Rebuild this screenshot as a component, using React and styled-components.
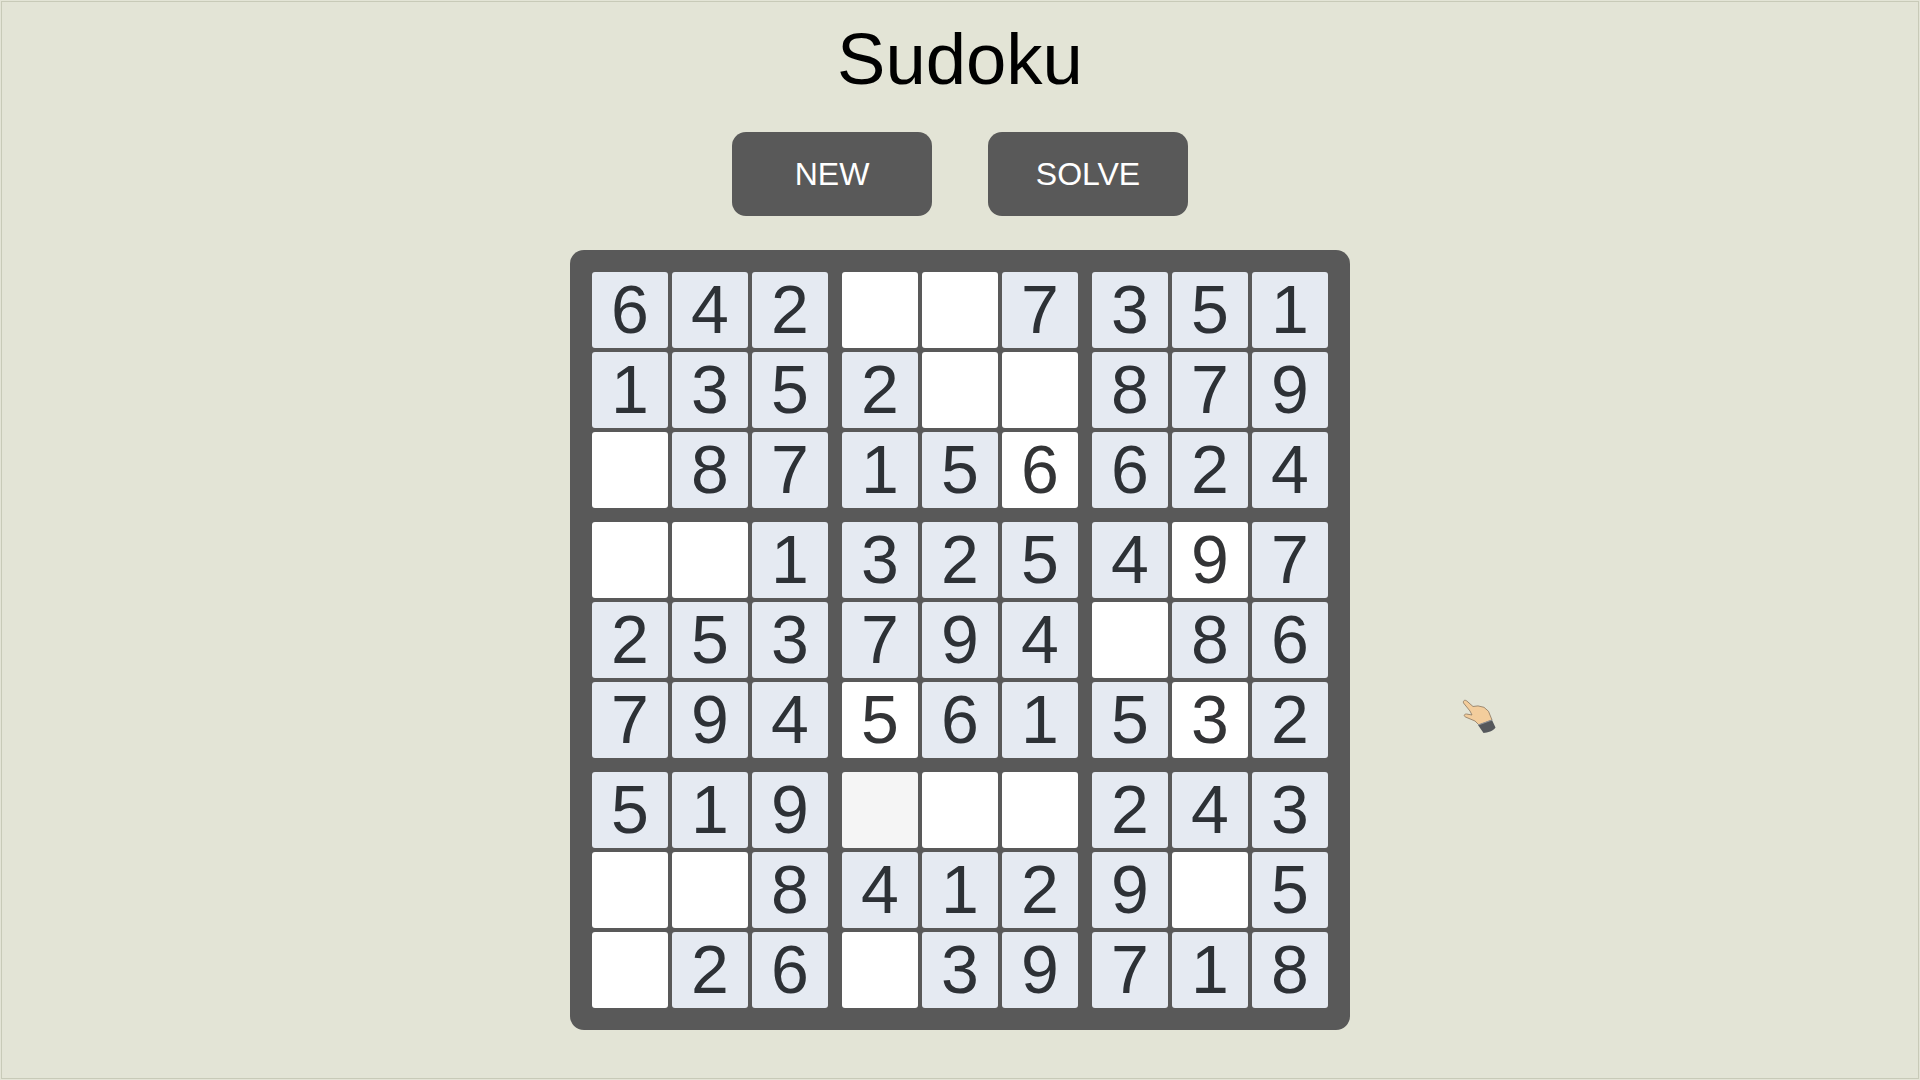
import React from "react";
import styled, { createGlobalStyle } from "styled-components";

const rows = [
  "642  7351",
  "1352  879",
  " 87156624",
  "  1325497",
  "253794 86",
  "794561532",
  "519   243",
  "  84129 5",
  " 26 39718",
];

// numbers the player typed in, these stay white like the empty cells
const filled = ["2-5", "3-7", "5-3", "5-7"];
const active = "6-3";

const indexes = [0, 1, 2];

export default function App() {
  return (
    <Page>
      <GlobalStyle />
      <Title>Sudoku</Title>
      <Toolbar>
        <Button>NEW</Button>
        <Button>SOLVE</Button>
      </Toolbar>
      <Board>
        {indexes.map((blockRow) =>
          indexes.map((blockCol) => (
            <Block key={`${blockRow}-${blockCol}`}>
              {indexes.map((r) =>
                indexes.map((c) => {
                  const row = blockRow * 3 + r;
                  const col = blockCol * 3 + c;
                  const id = `${row}-${col}`;
                  const value = rows[row][col].trim();
                  return (
                    <Cell
                      key={id}
                      $given={value !== "" && !filled.includes(id)}
                      $active={id === active}
                    >
                      {value}
                    </Cell>
                  );
                })
              )}
            </Block>
          ))
        )}
      </Board>
      <Cursor viewBox="0 0 50 50" width="50" height="50">
        <path
          d="M11.500 11C10.800 8.500 13 7.500 14.800 9L21 14.500l5-.6 6 1.400 4.500 4 3.500 8.700-13 5-4-4-9.500-4c-2-1-1.500-3 1-3l5.500 1-2-4z"
          fill="#f3cd9c"
          stroke="#8a7660"
          strokeWidth="0.8"
          strokeLinejoin="round"
        />
        <path d="M26 33l14-5 3.500 7.500c-2 3.500-8 5-12 5.500z" fill="#55585c" />
        <path d="M26 33l14-5" fill="none" stroke="#8f9296" strokeWidth="1.200" />
      </Cursor>
    </Page>
  );
}

const GlobalStyle = createGlobalStyle`
  body {
    margin: 0;
    background: #e3e4d6;
    font-family: "Liberation Sans", Arial, sans-serif;
  }
`;

const Page = styled.div`
  position: relative;
  box-sizing: border-box;
  height: 1078px;
  margin: 1px;
  padding-top: 21px;
  border: 1px solid #c8cab8;
  display: flex;
  flex-direction: column;
  align-items: center;
  overflow: hidden;
`;

const Title = styled.h1`
  margin: 0;
  font-size: 72.5px;
  font-weight: 400;
  line-height: 72px;
  color: #000;
`;

const Toolbar = styled.div`
  display: flex;
  gap: 56px;
  margin-top: 37px;
`;

const Button = styled.button`
  width: 200px;
  height: 84px;
  padding: 0;
  border: 0;
  border-radius: 14px;
  background: #595959;
  color: #fff;
  font-family: inherit;
  font-size: 32px;
`;

const Board = styled.div`
  box-sizing: border-box;
  width: 780px;
  height: 780px;
  margin-top: 34px;
  padding: 21.67px;
  border-radius: 14px;
  background: #595959;
  display: grid;
  grid-template-columns: repeat(3, 236.67px);
  grid-template-rows: repeat(3, 236.67px);
  gap: 13.33px;
`;

const Block = styled.div`
  display: grid;
  grid-template-columns: repeat(3, 76.67px);
  grid-template-rows: repeat(3, 76.67px);
  gap: 3.33px;
`;

const Cell = styled.div`
  display: flex;
  align-items: center;
  justify-content: center;
  padding-bottom: 2px;
  border-radius: 3px;
  background: ${({ $given, $active }) =>
    $active ? "#f5f5f5" : $given ? "#e5eaf2" : "#fff"};
  color: ${({ $given }) => ($given ? "#2d3136" : "#333436")};
  font-size: 68px;
  line-height: 1;
`;

const Cursor = styled.svg`
  position: absolute;
  left: 1450px;
  top: 690px;
`;
